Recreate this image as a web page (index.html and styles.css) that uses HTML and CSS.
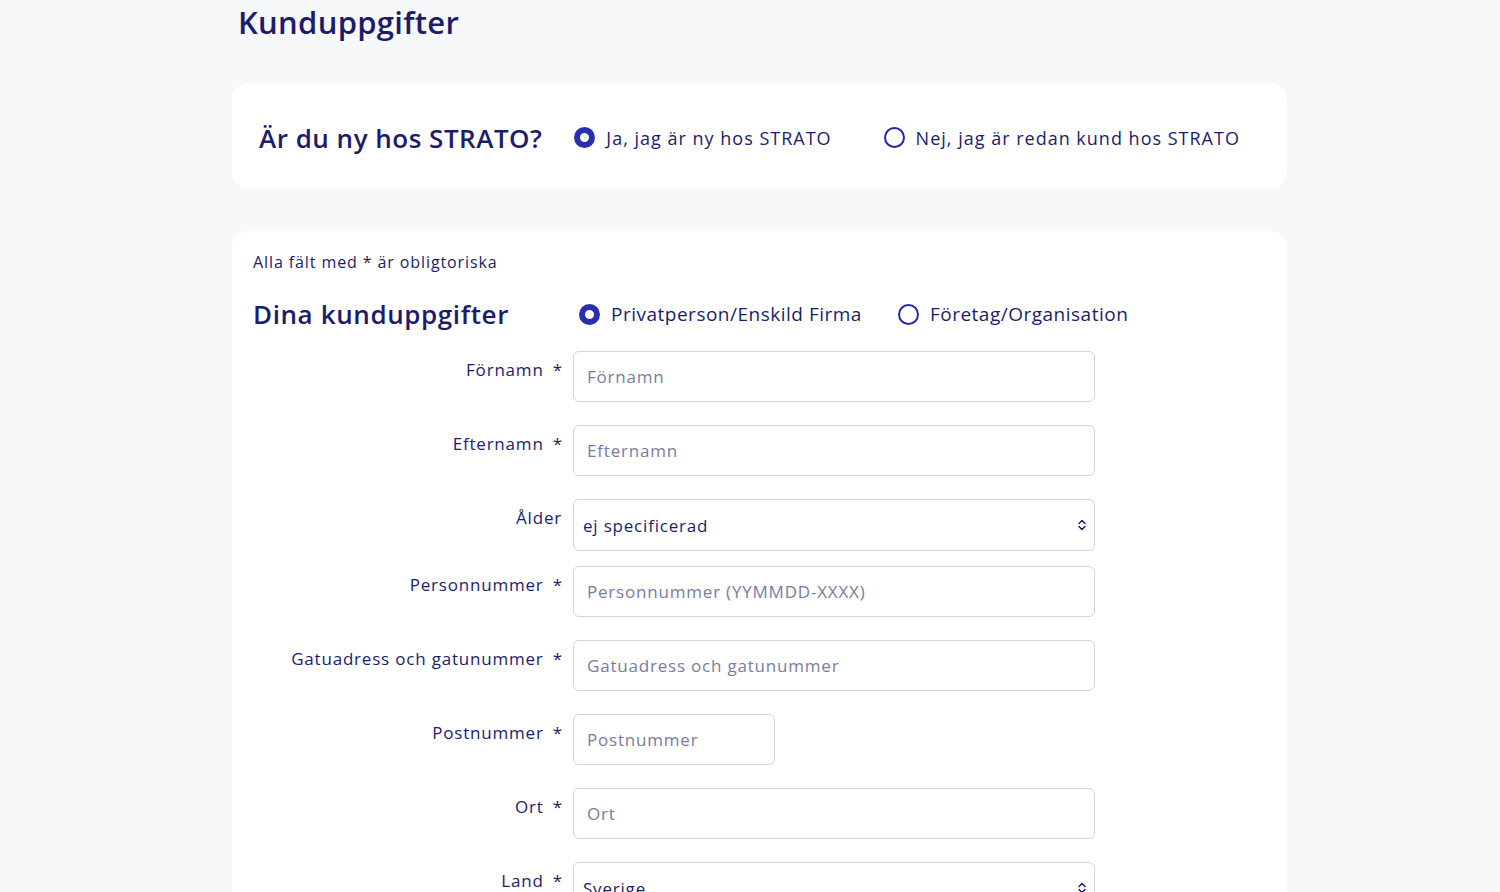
FILE: index.html
```html
<!DOCTYPE html>
<html lang="sv">
<head>
  <meta charset="UTF-8" />
  <meta name="viewport" content="width=device-width, initial-scale=1.0" />
  <title>Kunduppgifter</title>
  <link rel="stylesheet" href="styles.css">
</head>
<body>
  <div class="page">
    <h1>Kunduppgifter</h1>

    <div class="card card-new">
      <h2>Är du ny hos STRATO?</h2>
      <label class="radio"><input type="radio" name="new" checked><span class="dot"></span>Ja, jag är ny hos STRATO</label>
      <label class="radio"><input type="radio" name="new"><span class="dot"></span>Nej, jag är redan kund hos STRATO</label>
    </div>

    <div class="card card-form">
      <p class="note">Alla fält med * är obligtoriska</p>

      <div class="form-head">
        <h3>Dina kunduppgifter</h3>
        <label class="radio"><input type="radio" name="type" checked><span class="dot"></span>Privatperson/Enskild Firma</label>
        <label class="radio"><input type="radio" name="type"><span class="dot"></span>Företag/Organisation</label>
      </div>

      <div class="row">
        <label for="fornamn">Förnamn<span class="req">*</span></label>
        <input type="text" id="fornamn" placeholder="Förnamn">
      </div>
      <div class="row">
        <label for="efternamn">Efternamn<span class="req">*</span></label>
        <input type="text" id="efternamn" placeholder="Efternamn">
      </div>
      <div class="row row-select">
        <label for="alder">Ålder</label>
        <div class="select">
          <select id="alder">
            <option>ej specificerad</option>
            <option>18-25</option>
            <option>26-40</option>
          </select>
          <svg class="arrows" width="10" height="14" viewBox="0 0 10 14"><path d="M2 5.5L5 2.5L8 5.5M2 8.5L5 11.5L8 8.5" fill="none" stroke="#1c1c6b" stroke-width="1.5" stroke-linecap="round" stroke-linejoin="round"/></svg>
        </div>
      </div>
      <div class="row">
        <label for="pnr">Personnummer<span class="req">*</span></label>
        <input type="text" id="pnr" placeholder="Personnummer (YYMMDD-XXXX)">
      </div>
      <div class="row">
        <label for="adress">Gatuadress och gatunummer<span class="req">*</span></label>
        <input type="text" id="adress" placeholder="Gatuadress och gatunummer">
      </div>
      <div class="row">
        <label for="postnr">Postnummer<span class="req">*</span></label>
        <input type="text" id="postnr" class="short" placeholder="Postnummer">
      </div>
      <div class="row">
        <label for="ort">Ort<span class="req">*</span></label>
        <input type="text" id="ort" placeholder="Ort">
      </div>
      <div class="row row-select">
        <label for="land">Land<span class="req">*</span></label>
        <div class="select">
          <select id="land">
            <option>Sverige</option>
            <option>Norge</option>
            <option>Danmark</option>
          </select>
          <svg class="arrows" width="10" height="14" viewBox="0 0 10 14"><path d="M2 5.5L5 2.5L8 5.5M2 8.5L5 11.5L8 8.5" fill="none" stroke="#1c1c6b" stroke-width="1.5" stroke-linecap="round" stroke-linejoin="round"/></svg>
        </div>
      </div>
    </div>
  </div>
</body>
</html>
```

FILE: styles.css
```css
body {
  margin: 0;
  background-color: #f7f8fa;
  font-family: 'Open Sans', sans-serif;
  letter-spacing: 0.05em;
  color: #1c1c6b;
}
.page {
  width: 1055px;
  margin-left: 232px;
}
h1 {
  margin: 0 0 0 6px;
  height: 83px;
  font-size: 31px;
  font-weight: 600;
  letter-spacing: 0.3px;
  line-height: 44px;
}
.card {
  background: white;
  border-radius: 16px;
}
.card-new {
  display: flex;
  align-items: center;
  box-sizing: border-box;
  height: 105px;
  padding: 4px 27px 0;
}
.card-new h2 {
  margin: 0 32px 0 0;
  font-size: 26px;
  font-weight: 600;
  letter-spacing: 0.5px;
}
.radio {
  display: flex;
  align-items: center;
  font-size: 18px;
  cursor: pointer;
}
.card-new .radio {
  letter-spacing: 1px;
}
.card-new .radio + .radio {
  margin-left: 52px;
}
.radio input {
  display: none;
}
.dot {
  width: 21px;
  height: 21px;
  box-sizing: border-box;
  border: 2px solid #2327a8;
  border-radius: 50%;
  margin-right: 11px;
}
.radio input:checked + .dot {
  border: 6px solid #2a2fb0;
}
.card-form {
  margin-top: 43px;
  padding: 20px 21px 40px;
}
.note {
  margin: 0;
  font-size: 16px;
  letter-spacing: 0.9px;
}
.form-head {
  display: flex;
  align-items: center;
  margin: 23px 0 19px;
}
.form-head h3 {
  margin: 0 70px 0 0;
  font-size: 26px;
  font-weight: 600;
  letter-spacing: 0.6px;
}
.form-head .radio {
  font-size: 19px;
  letter-spacing: 0.5px;
}
.form-head .radio + .radio {
  margin-left: 36px;
}
.row {
  display: grid;
  grid-template-columns: 309px 522px;
  column-gap: 11px;
  align-items: start;
  margin-bottom: 23px;
}
.row-select {
  margin-bottom: 15px;
}
.row label {
  text-align: right;
  font-size: 17px;
  letter-spacing: 0.8px;
  padding-top: 7px;
}
.req {
  margin-left: 9px;
  letter-spacing: 0;
}
input[type="text"], select {
  box-sizing: border-box;
  width: 100%;
  height: 51px;
  padding: 0 13px;
  border: 1px solid #d3d3db;
  border-radius: 6px;
  font-family: inherit;
  font-size: 17px;
  letter-spacing: 0.8px;
  color: #1c1c6b;
  background: white;
}
input::placeholder {
  color: #7b7b9c;
}
input.short {
  width: 202px;
}
.select {
  position: relative;
}
select {
  appearance: none;
  height: 52px;
  padding: 0 9px;
}
.arrows {
  position: absolute;
  right: 8px;
  top: 19px;
  pointer-events: none;
}
```
